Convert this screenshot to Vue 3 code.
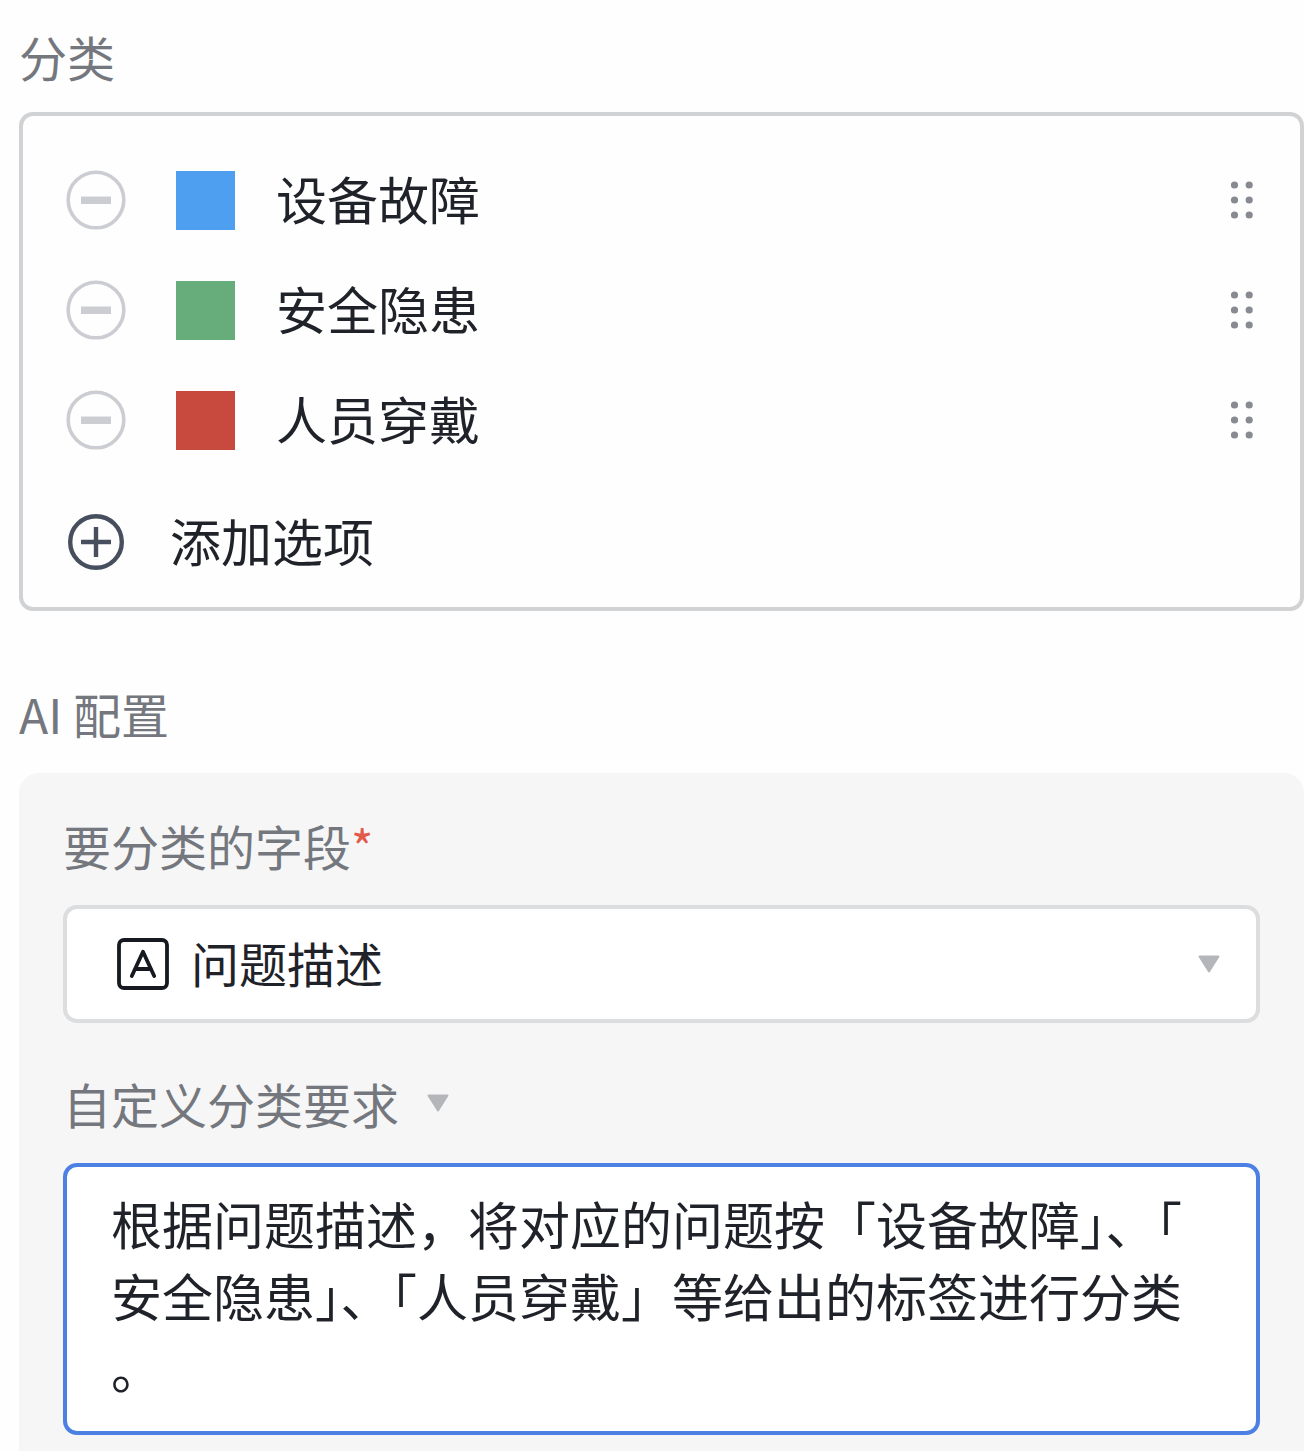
<script setup>
import { ref } from "vue";

const options = ref([
  { id: 1, name: "设备故障", color: "blue" },
  { id: 2, name: "安全隐患", color: "green" },
  { id: 3, name: "人员穿戴", color: "red" },
]);

const fields = ["问题描述"];
const field = ref(fields[0]);
const showRequirement = ref(true);
const requirement = ref(
  "根据问题描述，将对应的问题按「设备故障」、「安全隐患」、「人员穿戴」等给出的标签进行分类。"
);

const colors = ["blue", "green", "red"];
let nextId = 4;

const addOption = () => {
  options.value.push({
    id: nextId++,
    name: "",
    color: colors[options.value.length % colors.length],
  });
};

const removeOption = (id) => {
  options.value = options.value.filter((option) => option.id !== id);
};
</script>

<template>
  <main class="settings">
    <h2 class="label">分类</h2>
    <section class="options">
      <ul class="option-list">
        <li v-for="option in options" :key="option.id" class="option">
          <button
            type="button"
            class="icon-button"
            :aria-label="`删除${option.name}`"
            @click="removeOption(option.id)"
          >
            <svg class="remove-icon" viewBox="0 0 60 60">
              <circle cx="30" cy="30" r="27.8" />
              <rect x="15" y="26.5" width="30" height="7.5" />
            </svg>
          </button>
          <span class="swatch" :class="option.color"></span>
          <input
            v-model="option.name"
            class="option-name"
            type="text"
            aria-label="选项名称"
          />
          <button type="button" class="icon-button" aria-label="拖动排序">
            <svg class="grip-icon" viewBox="0 0 24 40">
              <template v-for="y in [5, 20, 35]" :key="y">
                <circle cx="4.5" :cy="y" r="3.6" />
                <circle cx="19.2" :cy="y" r="3.6" />
              </template>
            </svg>
          </button>
        </li>
      </ul>
      <button type="button" class="add-button" @click="addOption">
        <svg class="add-icon" viewBox="0 0 60 60">
          <circle cx="30" cy="30" r="25.8" />
          <path d="M30 15v30M15 30h30" />
        </svg>
        <span class="add-text">添加选项</span>
      </button>
    </section>

    <h2 class="label ai-label">AI 配置</h2>
    <section class="panel">
      <label class="label" for="field">要分类的字段<span class="required">*</span></label>
      <div class="select-box">
        <svg class="field-icon" viewBox="0 0 52 52">
          <rect x="2" y="2" width="48" height="48" rx="5" />
          <path d="M14.8 38 26 13.8 37.2 38M18.5 31h15" />
        </svg>
        <select id="field" v-model="field">
          <option v-for="name in fields" :key="name">{{ name }}</option>
        </select>
        <svg class="arrow" viewBox="0 0 22 18">
          <path d="M1.5 1.5h19L11 16.5z" />
        </svg>
      </div>

      <button
        type="button"
        class="label toggle"
        :aria-expanded="showRequirement"
        @click="showRequirement = !showRequirement"
      >
        自定义分类要求
        <svg class="arrow" viewBox="0 0 22 18">
          <path d="M1.5 1.5h19L11 16.5z" />
        </svg>
      </button>
      <textarea
        v-if="showRequirement"
        v-model="requirement"
        rows="3"
        spellcheck="false"
        aria-label="自定义分类要求"
      ></textarea>
    </section>
  </main>
</template>

<style>
body {
  margin: 0;
  background: #fefefe;
}
</style>

<style scoped>
* {
  box-sizing: border-box;
}

.settings {
  padding: 24px 0 0 19px;
  color: #1f2329;
  font-family: "Noto Sans CJK SC", sans-serif;
  font-size: 51px;
  line-height: 72px;
}

button,
input,
select,
textarea {
  margin: 0;
  padding: 0;
  border: none;
  outline: none;
  background: none;
  color: inherit;
  font: inherit;
}

svg {
  display: block;
  flex: none;
}

.label {
  display: block;
  margin: 0;
  color: #74787e;
  font-size: 48px;
  font-weight: 400;
  line-height: 64px;
}

.options {
  margin-top: 24px;
  padding: 48px 46px 29px 43px;
  border: 4px solid #d0d2d4;
  border-radius: 14px;
}

.option-list {
  display: flex;
  flex-direction: column;
  gap: 38px;
  margin: 0;
  padding: 0;
  list-style: none;
}

.option {
  display: flex;
  align-items: center;
}

.icon-button {
  flex: none;
  cursor: pointer;
}

.remove-icon,
.add-icon {
  width: 60px;
  height: 60px;
}

.remove-icon circle {
  fill: none;
  stroke: #cccdd2;
  stroke-width: 3.6;
}

.remove-icon rect {
  fill: #cccdd2;
}

.swatch {
  flex: none;
  width: 59px;
  height: 59px;
  margin: 0 41px 0 50px;
}

.blue {
  background: #4e9ff0;
}

.green {
  background: #67ad7b;
}

.red {
  background: #c84a3e;
}

.option-name {
  flex: 1;
  min-width: 0;
  height: 72px;
  padding-bottom: 4px;
}

.grip-icon {
  width: 24px;
  height: 40px;
  fill: #878a91;
}

.add-button {
  display: flex;
  align-items: center;
  gap: 44px;
  margin-top: 50px;
  cursor: pointer;
}

.add-text {
  padding-bottom: 4px;
  line-height: 68px;
}

.add-icon {
  fill: none;
  stroke: #474e5e;
  stroke-width: 4.4;
}

.ai-label {
  margin-top: 70px;
}

.panel {
  margin-top: 28px;
  padding: 40px 44px 17px;
  border-radius: 20px 20px 0 0;
  background: #f6f6f6;
}

.required {
  color: #e25a4c;
}

.select-box {
  display: flex;
  align-items: center;
  margin: 28px 0 48px;
  padding: 0 36px 0 50px;
  border: 4px solid #dcdddf;
  border-radius: 14px;
  background: #fff;
}

.select-box select {
  flex: 1;
  min-width: 0;
  height: 110px;
  padding: 0 0 4px 22px;
  appearance: none;
  font-size: 48px;
}

.field-icon {
  width: 52px;
  height: 52px;
  fill: none;
  stroke: #16191f;
  stroke-width: 3.8;
  stroke-linecap: round;
  stroke-linejoin: round;
}

.arrow {
  width: 22px;
  height: 18px;
  fill: #b4b6ba;
  stroke: #b4b6ba;
  stroke-width: 2;
  stroke-linejoin: round;
}

.toggle {
  display: flex;
  align-items: center;
  gap: 28px;
  cursor: pointer;
}

textarea {
  display: block;
  width: 100%;
  margin-top: 28px;
  padding: 20px 52px 28px 44px;
  border: 4px solid #4c80e2;
  border-radius: 14px;
  background: #fff;
  line-height: 72px;
  line-break: anywhere;
  overflow: hidden;
  resize: none;
}
</style>
